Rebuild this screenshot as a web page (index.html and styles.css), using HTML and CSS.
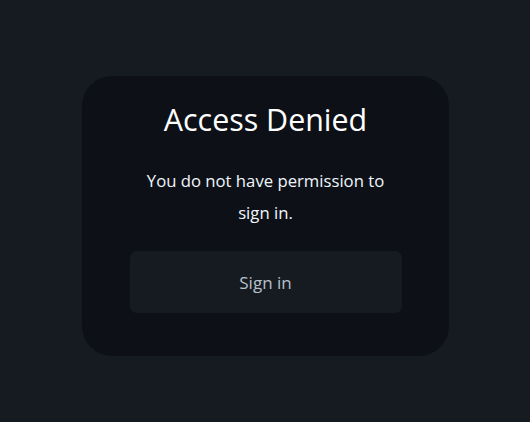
FILE: index.html
```html
<!DOCTYPE html>
<html>
<head>
<meta charset="utf-8">
<link rel="stylesheet" href="styles.css">
</head>
<body>
<main class="page">
  <section class="card">
    <h1 class="title">Access Denied</h1>
    <p class="message">You do not have permission to sign in.</p>
    <button class="btn">Sign in</button>
  </section>
</main>
</body>
</html>
```
FILE: styles.css
```css
html, body {
  margin: 0;
  padding: 0;
  height: 100%;
  background: #161b22;
  font-family: "Open Sans", "Noto Sans", sans-serif;
}
.page {
  display: flex;
  justify-content: center;
  align-items: flex-start;
  padding-top: 76px;
}
.card {
  box-sizing: border-box;
  width: 367px;
  height: 280px;
  background: #0d1117;
  border-radius: 30px;
  padding: 21px 47px 0 48px;
  display: flex;
  flex-direction: column;
  align-items: stretch;
  text-align: center;
}
.title {
  margin: 0;
  font-size: 30.4px;
  font-weight: 400;
  line-height: 45px;
  color: #ffffff;
}
.message {
  margin: 23px 16px 0;
  font-size: 16.7px;
  line-height: 32px;
  color: #f0f6fc;
}
.btn {
  margin-top: 22px;
  height: 62px;
  padding-top: 2px;
  border: none;
  border-radius: 7px;
  background: #161b22;
  color: #b8c0c8;
  font-family: inherit;
  font-size: 17px;
}
```
